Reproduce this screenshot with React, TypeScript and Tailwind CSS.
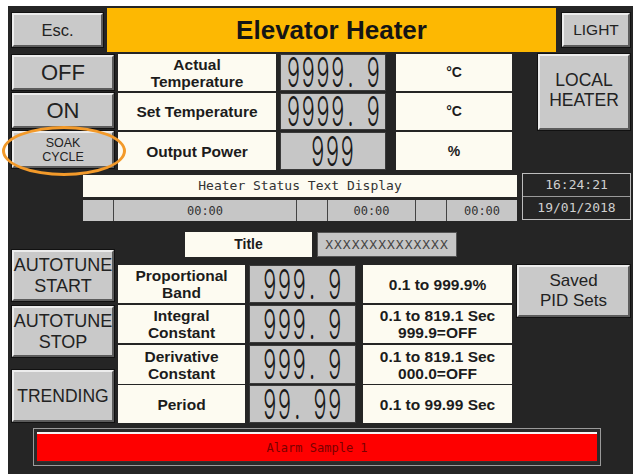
import React from "react";

const btn =
  "flex items-center justify-center text-center bg-[#c9c9c9] border-2 border-t-[#ececec] border-l-[#ececec] border-b-[#5c5c5c] border-r-[#5c5c5c] outline outline-1 outline-[#111] text-[#222] font-['Liberation_Sans',Arial,sans-serif]";
const cream =
  "flex items-center justify-center text-center bg-[#fdfbf1] text-[#1c1c1c] font-bold font-['Liberation_Sans',Arial,sans-serif]";
const valBox =
  "flex items-center justify-center bg-[#c6c6c6] border border-[#3a3a3a]";

function Digits({ text }: { text: string }) {
  return (
    <div className="flex scale-x-[0.9] scale-y-[1.68] font-['Inter',sans-serif] font-light text-[24px] leading-[19px] text-[#1a1a1a]">
      {text.split("").map((c, i) => (
        <span
          key={i}
          className={`${c === "." ? "w-[12px]" : c === " " ? "w-[11px]" : "w-[16.4px]"} text-center whitespace-pre`}
        >
          {c}
        </span>
      ))}
    </div>
  );
}

const pix = "font-['DejaVu_Sans_Mono',monospace]";

export default function App() {
  return (
    <div className="relative w-[633px] h-[474px] bg-white pl-[8px] pt-[6px] flex overflow-hidden">
      <div className="flex-1 bg-[#252525] flex flex-col">
        {/* Header */}
        <div className="mt-[2px] h-[44px] flex items-center">
          <div className={`${btn} ml-[4px] w-[91px] h-[34px] text-[16.5px]`}>Esc.</div>
          <div className="ml-[4px] w-[449px] h-[44px] bg-[#fdb802] flex items-center justify-center font-['Liberation_Sans',Arial,sans-serif] font-bold text-[26px] text-[#151515]">
            Elevator Heater
          </div>
          <div className={`${btn} ml-[6px] w-[68px] h-[34px] text-[15.5px] text-[#4a4a4a]`}>LIGHT</div>
        </div>

        {/* Section A */}
        <div className="mt-[2px] h-[116px] flex">
          <div className="ml-[4px] w-[102px] pt-[1px] flex flex-col gap-[3px]">
            <div className={`${btn} h-[35px] text-[22px]`}>OFF</div>
            <div className={`${btn} h-[35px] text-[22px]`}>ON</div>
            <div className={`${btn} h-[37px] text-[12.5px] leading-[14px]`}>
              SOAK
              <br />
              CYCLE
            </div>
          </div>
          <div className="ml-[4px] w-[394px] flex flex-col gap-[2px]">
            {[
              { l: "Actual\nTemperature", v: "9999. 9", u: "°C", h: "h-[37px]" },
              { l: "Set Temperature", v: "9999. 9", u: "°C", h: "h-[37px]" },
              { l: "Output Power", v: "999", u: "%", h: "h-[38px]" },
            ].map((r, i) => (
              <div key={i} className={`flex ${r.h}`}>
                <div className={`${cream} w-[158px] text-[15.5px] leading-[17px] whitespace-pre-line`}>{r.l}</div>
                <div className={`${valBox} ml-[4px] w-[106px]`}>
                  <Digits text={r.v} />
                </div>
                <div className={`${cream} ml-[10px] w-[116px] text-[14px]`}>{r.u}</div>
              </div>
            ))}
          </div>
          <div className={`${btn} ml-[26px] w-[92px] h-[76px] text-[17.5px] leading-[20px] items-start pt-[14px]`}>
            LOCAL
            <br />
            HEATER
          </div>
        </div>

        {/* Section B */}
        <div className="mt-[3px] h-[48px] flex">
          <div className="ml-[75px] w-[434px] flex flex-col">
            <div className={`mt-[2px] h-[22px] bg-[#fdfbf1] flex items-center justify-center text-[13px] text-[#333] ${pix}`}>
              Heater Status Text Display
            </div>
            <div className={`mt-[3px] h-[21px] flex gap-[1px] bg-[#444] text-[12px] text-[#333] ${pix}`}>
              <div className="w-[30px] bg-[#c6c6c6]" />
              <div className="w-[182px] bg-[#c6c6c6] flex items-center justify-center">00:00</div>
              <div className="w-[30px] bg-[#c6c6c6]" />
              <div className="w-[87px] bg-[#c6c6c6] flex items-center justify-center">00:00</div>
              <div className="w-[30px] bg-[#c6c6c6]" />
              <div className="flex-1 bg-[#c6c6c6] flex items-center justify-center">00:00</div>
            </div>
          </div>
          <div className={`ml-[5px] w-[109px] h-[47px] border border-[#bdbdbd] flex flex-col text-[13px] text-[#cfcfcf] ${pix}`}>
            <div className="flex-1 flex items-center justify-center border-b border-[#9a9a9a]">16:24:21</div>
            <div className="flex-1 flex items-center justify-center">19/01/2018</div>
          </div>
        </div>

        {/* Section C */}
        <div className="h-[202px] flex">
          <div className="ml-[4px] w-[102px] flex flex-col">
            <div className={`${btn} mt-[29px] h-[51px] text-[18px] leading-[21px]`}>
              AUTOTUNE
              <br />
              START
            </div>
            <div className={`${btn} mt-[5px] h-[51px] text-[18px] leading-[21px]`}>
              AUTOTUNE
              <br />
              STOP
            </div>
            <div className={`${btn} mt-[13px] h-[52px] text-[17.5px]`}>TRENDING</div>
          </div>
          <div className="ml-[4px] flex flex-col">
            <div className="mt-[11px] h-[25px] flex">
              <div className={`${cream} ml-[67px] w-[127px] text-[14px]`}>Title</div>
              <div className={`ml-[5px] w-[140px] bg-[#c6c6c6] border border-[#555] flex items-center justify-center text-[13px] tracking-[1px] text-[#444] ${pix}`}>
                XXXXXXXXXXXXXX
              </div>
            </div>
            <div className="mt-[8px] flex">
              <div className="w-[394px] flex flex-col">
                {[
                  { l: "Proportional\nBand", v: "999. 9", u: "0.1 to 999.9%", h: "h-[38px]", g: "" },
                  { l: "Integral\nConstant", v: "999. 9", u: "0.1 to 819.1 Sec\n999.9=OFF", h: "h-[38px]", g: "mt-[2px]" },
                  { l: "Derivative\nConstant", v: "999. 9", u: "0.1 to 819.1 Sec\n000.0=OFF", h: "h-[39px]", g: "mt-[2px]" },
                  { l: "Period", v: "99. 99", u: "0.1 to 99.99 Sec", h: "h-[38px]", g: "mt-[1px]" },
                ].map((r, i) => (
                  <div key={i} className={`flex ${r.h} ${r.g}`}>
                    <div className={`${cream} w-[127px] text-[15.5px] leading-[17px] whitespace-pre-line`}>{r.l}</div>
                    <div className={`${valBox} ml-[4px] w-[107px]`}>
                      <Digits text={r.v} />
                    </div>
                    <div className={`${cream} ml-[7px] w-[149px] text-[15.5px] leading-[17px] whitespace-pre-line`}>{r.u}</div>
                  </div>
                ))}
              </div>
              <div className={`${btn} ml-[5px] w-[113px] h-[52px] text-[17px] leading-[20px]`}>
                Saved
                <br />
                PID Sets
              </div>
            </div>
          </div>
        </div>

        {/* Alarm */}
        <div className="mt-[5px] ml-[25px] w-[568px] h-[38px] border border-[#9a9a9a] p-[3px] bg-[#2a2a2a]">
          <div className={`h-full bg-[#fe0000] border-t-2 border-t-[#f4f4f4] border-b border-b-[#333] flex items-center justify-center text-[12px] text-[#7a0000] ${pix}`}>
            Alarm Sample 1
          </div>
        </div>
      </div>

      {/* Orange highlight ellipse */}
      <div className="absolute left-[2px] top-[126px] w-[124px] h-[50px] rounded-[50%] border-[3px] border-[#f39a2a]" />
    </div>
  );
}
